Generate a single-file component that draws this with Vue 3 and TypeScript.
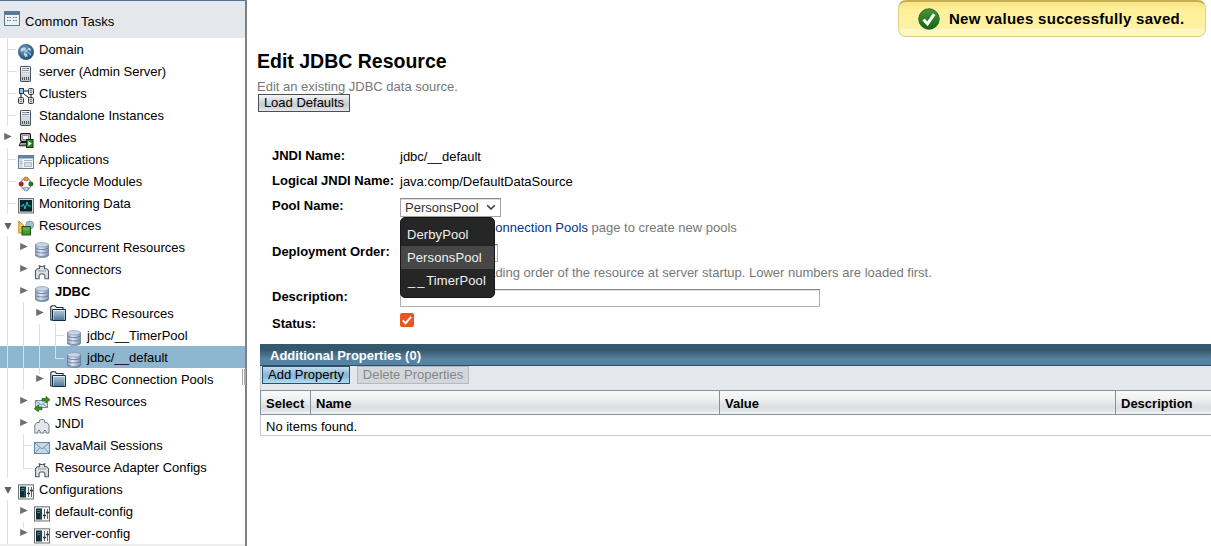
<script setup lang="ts">
type Guide = 'line' | 'tee' | 'end' | 'stub' | 'none' | 'right' | 'down'

interface TreeNode {
  label: string
  icon: string
  level: number
  guides: Guide[]
  bold?: boolean
  selected?: boolean
}

const nodes: TreeNode[] = [
  { label: 'Domain', icon: 'globe', level: 0, guides: ['tee'] },
  { label: 'server (Admin Server)', icon: 'server', level: 0, guides: ['tee'] },
  { label: 'Clusters', icon: 'cluster', level: 0, guides: ['tee'] },
  { label: 'Standalone Instances', icon: 'server', level: 0, guides: ['tee'] },
  { label: 'Nodes', icon: 'node', level: 0, guides: ['right'] },
  { label: 'Applications', icon: 'app', level: 0, guides: ['tee'] },
  { label: 'Lifecycle Modules', icon: 'lifecycle', level: 0, guides: ['tee'] },
  { label: 'Monitoring Data', icon: 'monitor', level: 0, guides: ['tee'] },
  { label: 'Resources', icon: 'resources', level: 0, guides: ['down'] },
  { label: 'Concurrent Resources', icon: 'db', level: 1, guides: ['line', 'right'] },
  { label: 'Connectors', icon: 'connector', level: 1, guides: ['line', 'right'] },
  { label: 'JDBC', icon: 'db', level: 1, guides: ['line', 'right'], bold: true },
  { label: 'JDBC Resources', icon: 'folder', level: 2, guides: ['line', 'line', 'right'] },
  { label: 'jdbc/__TimerPool', icon: 'db', level: 3, guides: ['line', 'line', 'line', 'tee'] },
  { label: 'jdbc/__default', icon: 'db', level: 3, guides: ['line', 'line', 'line', 'end'], selected: true },
  { label: 'JDBC Connection Pools', icon: 'folder', level: 2, guides: ['line', 'line', 'stub'] },
  { label: 'JMS Resources', icon: 'jms', level: 1, guides: ['line', 'right'] },
  { label: 'JNDI', icon: 'jndi', level: 1, guides: ['line', 'right'] },
  { label: 'JavaMail Sessions', icon: 'mail', level: 1, guides: ['line', 'tee'] },
  { label: 'Resource Adapter Configs', icon: 'connector', level: 1, guides: ['line', 'end'] },
  { label: 'Configurations', icon: 'config', level: 0, guides: ['down'] },
  { label: 'default-config', icon: 'config', level: 1, guides: ['line', 'right'] },
  { label: 'server-config', icon: 'config', level: 1, guides: ['line', 'stub'] },
]

interface Pool {
  prefix: string
  name: string
}

const pools: Pool[] = [
  { prefix: '', name: 'DerbyPool' },
  { prefix: '', name: 'PersonsPool' },
  { prefix: '__', name: 'TimerPool' },
]
const current = 'PersonsPool'
</script>

<template>
  <div class="page">
    <svg class="defs" width="0" height="0" aria-hidden="true">
      <defs>
        <radialGradient id="gGlobe" cx=".4" cy=".35" r=".65">
          <stop offset="0" stop-color="#79a9cf" /><stop offset=".6" stop-color="#3d719d" /><stop offset="1" stop-color="#234b70" />
        </radialGradient>
        <linearGradient id="gDb"><stop offset="0" stop-color="#8fa2c0" /><stop offset=".4" stop-color="#e2eaf6" /><stop offset="1" stop-color="#7e93b6" /></linearGradient>
        <linearGradient id="gFolder" x2="0" y2="1"><stop offset="0" stop-color="#a9c2d8" /><stop offset="1" stop-color="#56799a" /></linearGradient>
        <linearGradient id="gSteel" x2="0" y2="1"><stop offset="0" stop-color="#fff" /><stop offset="1" stop-color="#b8c0ca" /></linearGradient>
        <linearGradient id="gCheck" x2="0" y2="1"><stop offset="0" stop-color="#4b9440" /><stop offset="1" stop-color="#13650f" /></linearGradient>
      </defs>
    </svg>

    <aside class="side">
      <div class="side-head">
        <svg class="tasks" width="16" height="15" viewBox="0 0 16 15">
          <rect x=".5" y=".5" width="15" height="14" fill="#edf2f6" stroke="#60788c" />
          <rect x="1" y="1" width="14" height="3" fill="#527b9b" />
          <path d="M3 6.5h1m.6 0h1m.6 0h.8M3 9.5h1m.6 0h1m.6 0h.8M9 6.5h1m.6 0h1m.6 0h.8M9 9.5h1m.6 0h1m.6 0h.8" stroke="#6d7780" />
        </svg>
        <span>Common Tasks</span>
      </div>
      <div v-for="n in nodes" :key="n.label" class="node" :class="[`lv${n.level}`, { selected: n.selected }]">
        <span v-for="(g, i) in n.guides" :key="i" class="guide" :class="g">
          <svg v-if="g === 'right' || g === 'stub'" class="arrow" width="8" height="7" viewBox="0 0 8 7"><path d="M.2 0 7.8 3.5.2 7z" fill="#6e6e6e" /></svg>
          <svg v-if="g === 'down'" class="arrow open" width="8" height="7" viewBox="0 0 8 7"><path d="M.4 0h7.2L4 7z" fill="#606060" /></svg>
        </span>
        <svg class="icon" width="16" height="16" viewBox="0 0 16 16">
          <g v-if="n.icon === 'globe'">
            <circle cx="8" cy="8" r="7.7" fill="url(#gGlobe)" stroke="#315c82" stroke-width=".6" />
            <path d="M3.4 4.5 6 3.2l2 .9-.8 1.8-2.1.3L4 8 2.3 6.7zM9.8 3.5l2.6 1 .9 2.3-2.4-.5zM6.2 9l2.5.7.6 1.6-1.6 2.1-1.3-1.8zM11.3 10l1.7-.5-.8 2.4z" fill="#b9d4e8" />
            <path d="M3 4.5 8 7l4-3M8 7l-2 3 4 2.5M8 7l4.5 3" stroke="#dfedf8" stroke-width=".6" fill="none" />
          </g>
          <g v-else-if="n.icon === 'server'">
            <rect x="2.5" y=".5" width="10" height="15" rx=".6" fill="url(#gSteel)" stroke="#4b5158" />
            <path d="M4 2.5h5M4 4.5h7" stroke="#8d949d" /><path d="M9 2.5h2" stroke="#2465c4" /><path d="M4 6.5h7" stroke="#c3c9d0" />
            <path d="M4.5 11v3m2-3v3m2-3v3m2-3v3" stroke="#535961" />
          </g>
          <g v-else-if="n.icon === 'cluster'">
            <path d="M5 3h5M3 6v3M6 6l5 4M13 7v2" stroke="#111" fill="none" />
            <rect x="1.5" y=".5" width="4" height="5" fill="#8cc4e8" stroke="#123f67" />
            <g fill="#d5d9dd" stroke="#353a3f"><rect x="10.5" y=".5" width="5" height="6" rx="1" /><rect x=".5" y="9.5" width="5" height="6" rx="1" /><rect x="10.5" y="9.5" width="5" height="6" rx="1" /></g>
            <path d="M12 2.5h2m-2 2h2M2 11.5h2m-2 2h2m8-2h2m-2 2h2" stroke="#737a80" />
          </g>
          <g v-else-if="n.icon === 'node'">
            <rect x="2.6" y="1.6" width="9.8" height="7.8" rx="1" fill="#e3e5e9" stroke="#171717" stroke-width="1.2" />
            <path d="M4.5 3.5h6v4h-6z" fill="#fff" stroke="#777" stroke-width=".8" />
            <path d="m2.5 10.5-1.3 3.3h8.3v-3.3z" fill="#cfd2d8" stroke="#111" /><path d="M3 12.2h5" stroke="#444" stroke-width=".8" />
            <rect x="8.5" y="7.5" width="6.5" height="8" fill="#2d8728" stroke="#0c380b" /><path d="m10.3 9 3.4 2.5-3.4 2.8z" fill="#fff" />
          </g>
          <g v-else-if="n.icon === 'app'">
            <rect x=".5" y="1.5" width="15" height="13" fill="#f4f7f9" stroke="#707b85" /><path d="M1 2h14v2.5H1z" fill="#6186a4" />
            <path d="M1.5 5h3v9h-3z" fill="#c7dae8" /><path d="M6 6.5h8M2 7.5h2m-2 2h2" stroke="#a5b6c4" /><path d="M6.5 8.5h7v4h-7z" fill="#d5e1ea" stroke="#aabbc9" />
          </g>
          <g v-else-if="n.icon === 'lifecycle'">
            <circle cx="8" cy="8" r="5.3" fill="none" stroke="#92969b" stroke-width="1.3" />
            <rect x="6" y="1.2" width="4" height="3.5" rx="1.2" fill="#efa40c" stroke="#865a0a" stroke-width=".7" />
            <rect x="1.2" y="6.2" width="4" height="3.5" rx="1.2" fill="#d31111" stroke="#780909" stroke-width=".7" />
            <rect x="10.9" y="6.2" width="4" height="3.5" rx="1.2" fill="#247c20" stroke="#0b420a" stroke-width=".7" />
            <rect x="6" y="11.2" width="4" height="3.5" rx="1.2" fill="#b9dbef" stroke="#50758d" stroke-width=".7" />
          </g>
          <g v-else-if="n.icon === 'monitor'">
            <rect x=".5" y=".5" width="15" height="14.5" fill="#d4d8dc" stroke="#72777c" /><rect x="2" y="2" width="12" height="11.5" fill="#0b252b" />
            <path d="M2.5 8h2l1-2 1.5 5 2-7 1.3 4H13" fill="none" stroke="#29c3cf" />
          </g>
          <g v-else-if="n.icon === 'resources'">
            <circle cx="11.8" cy="5" r="4" fill="#a9bdd2" stroke="#6c8095" stroke-width=".7" /><path d="M.8 1v12h5.5V6z" fill="#f7ca5b" stroke="#c28618" />
            <rect x="4" y="6.5" width="8.5" height="8.5" fill="#45962e" stroke="#195d0c" /><path d="M5 7.5h6.5v3H5z" fill="#65aa4b" />
          </g>
          <g v-else-if="n.icon === 'db'">
            <path d="M1.5 2.5v10.8C2.5 16.4 13.5 16.4 14.5 13.3V2.5z" fill="url(#gDb)" stroke="#687991" stroke-width=".7" />
            <path d="M1.5 5.8c1.8 2.4 11.2 2.4 13 0m-13 3.4c1.8 2.4 11.2 2.4 13 0m-13 3.4c1.8 2.4 11.2 2.4 13 0" fill="none" stroke="#5d7292" stroke-width=".8" />
            <ellipse cx="8" cy="2.8" rx="6.5" ry="2.2" fill="#c6d5ea" stroke="#8798ad" stroke-width=".7" />
          </g>
          <g v-else-if="n.icon === 'connector'">
            <path d="M5.5 2.5h5v2.2h2.2l1.8 2v8h-3.6v-3.2L9.6 10H6.4l-1.3 1.5v3.2H1.5v-8l1.8-2h2.2z" fill="#dce0e5" stroke="#555b62" stroke-width="1.1" />
            <path d="M4 7h8" stroke="#9aa1a9" /><path d="M4.5 1.8h2m3 0h2" stroke="#555b62" />
          </g>
          <g v-else-if="n.icon === 'folder'">
            <path d="M2 15H.8V1.8L2 .8h3.2l1.4 1.7H13v2" fill="#f2f5f7" stroke="#202a34" stroke-width="1.1" /><path d="M2.5 4.5h13v11h-13z" fill="#e3ecf3" stroke="#142d44" />
            <path d="M3.5 6h11v9h-11z" fill="url(#gFolder)" />
          </g>
          <g v-else-if="n.icon === 'jms'">
            <rect x="1.5" y="4.5" width="12" height="7" fill="#d2e1ee" stroke="#758ca1" /><path d="m2 5 5.5 4L13 5M2 11l4-3m7 3L9 8" fill="none" stroke="#8199ad" />
            <path d="M8 2.5h4V.5L16 3.8l-4 3.1V5H8zM8 11H4.5V9L.3 12.7l4.2 3.1v-2H8z" fill="#3d941a" stroke="#245d0b" stroke-width=".7" />
          </g>
          <g v-else-if="n.icon === 'jndi'">
            <path d="M5.3 4.5V3c0-2 5.4-2 5.4 0v1.5H13l2 2.5v8h-3v-2l-1-1-1 1v2H6v-2l-1-1-1 1v2H.8V7l2-2.5z" fill="#e3e7eb" stroke="#777d84" />
          </g>
          <g v-else-if="n.icon === 'mail'">
            <rect x=".5" y="2.5" width="15" height="11" fill="#c3d8e8" stroke="#6d8599" /><path d="m1 3 7 6 7-6M1 13l5-5.5m9 5.5-5-5.5" fill="none" stroke="#7892a8" />
          </g>
          <g v-else-if="n.icon === 'config'">
            <rect x=".5" y=".8" width="15" height="14.2" fill="#f3f4f5" stroke="#6c7176" /><rect x="2" y="2.5" width="6" height="11" fill="#102b32" />
            <path d="M3 4.5h3M3 6.5h3" stroke="#279299" /><path d="M6.9 3v10" stroke="#496b74" stroke-width=".8" />
            <path d="M10.5 3v10m3-10v10" stroke="#666" /><path d="M9 9.5h3m0-3h3" stroke="#333" stroke-width="1.3" />
          </g>
        </svg>
        <span class="label" :class="{ bold: n.bold }">{{ n.label }}</span>
      </div>
      <div class="side-foot"></div>
      <div class="grip"></div>
    </aside>

    <main class="main">
      <div class="toast">
        <svg width="22" height="22" viewBox="0 0 22 22">
          <circle cx="11" cy="11" r="10.3" fill="url(#gCheck)" stroke="#1c5c18" stroke-width=".8" />
          <path d="m5.5 11.5 4 4.3 6.7-9.6" fill="none" stroke="#fff" stroke-width="3" />
        </svg>
        <span>New values successfully saved.</span>
      </div>

      <h1>Edit JDBC Resource</h1>
      <p class="intro">Edit an existing JDBC data source.</p>
      <button class="btn load">Load Defaults</button>

      <div class="form">
        <div class="field jndi-row"><label>JNDI Name:</label><div class="value text">jdbc/__default</div></div>
        <div class="field logical-row"><label>Logical JNDI Name:</label><div class="value text">java:comp/DefaultDataSource</div></div>
        <div class="field pool-row">
          <label>Pool Name:</label>
          <div class="value">
            <div class="select">
              <span>{{ current }}</span>
              <svg width="10" height="7" viewBox="0 0 10 7"><path d="m1.2 1.2 3.8 3.8 3.8-3.8" fill="none" stroke="#333" stroke-width="1.5" /></svg>
              <div class="menu">
                <div v-for="p in pools" :key="p.name" class="option" :class="{ active: p.name === current }"><span v-if="p.prefix" class="prefix">{{ p.prefix }}</span>{{ p.name }}</div>
              </div>
            </div>
            <div class="help">Use the JDBC <a>Connection Pools</a> page to create new pools</div>
          </div>
        </div>
        <div class="field order-row">
          <label>Deployment Order:</label>
          <div class="value"><div class="input order"></div><div class="help">Specifies the loading order of the resource at server startup. Lower numbers are loaded first.</div></div>
        </div>
        <div class="field desc-row"><label>Description:</label><div class="value"><div class="input desc"></div></div></div>
        <div class="field status-row">
          <label>Status:</label>
          <div class="value"><svg class="check" width="14" height="14" viewBox="0 0 14 14"><rect width="14" height="14" rx="2" fill="#e95420" /><path d="m2.8 7.4 2.8 2.8 5.6-6.4" fill="none" stroke="#fff" stroke-width="2" /></svg></div>
        </div>
      </div>

      <section class="table">
        <div class="caption">Additional Properties (0)</div>
        <div class="actions"><button class="btn primary">Add Property</button><button class="btn disabled">Delete Properties</button></div>
        <div class="head"><div>Select</div><div>Name</div><div>Value</div><div>Description</div></div>
        <div class="empty">No items found.</div>
      </section>
    </main>
  </div>
</template>

<style>
body { margin: 0; overflow: hidden; background: #fff; }
</style>

<style scoped>
.page { display: flex; width: 1211px; height: 546px; overflow: hidden; font: 13px/16px "Liberation Sans", Arial, sans-serif; color: #000; background: #fff; }
.page * { box-sizing: border-box; }
.defs { position: absolute; }
.side { position: relative; width: 247px; flex: none; border-right: 2px solid #808080; }
.side-head { height: 38px; background: #e4e8ec; border-top: 1px solid #4b7599; display: flex; padding: 10px 0 0 4px; }
.side-head span { margin: 3px 0 0 5px; }
.node { height: 22px; display: flex; position: relative; padding-left: 2px; white-space: nowrap; }
.node.selected { background: #8fb6cf; }
.guide { width: 16px; height: 22px; flex: none; position: relative; }
.guide.line::before, .guide.tee::before { content: ""; display: block; margin-left: 5px; width: 1px; height: 22px; background: #dedede; }
.guide.end::before { content: ""; display: block; margin-left: 5px; width: 8px; height: 12px; border-left: 1px solid #dedede; border-bottom: 1px solid #dedede; }
.guide.stub::before { content: ""; position: absolute; left: 5px; width: 1px; height: 6px; background: #dedede; }
.guide.tee::after { content: ""; position: absolute; left: 6px; top: 11px; width: 8px; height: 1px; background: #dedede; }
.arrow { display: block; margin: 7px 0 0 2px; }
.arrow.open { margin-top: 9px; }
.icon { flex: none; margin-top: 6px; }
.lv2 .icon { margin-top: 3px; }
.label { margin: 4px 0 0 5px; }
.lv2 .label { margin-left: 8px; }
.bold { font-weight: bold; }
.side-foot { height: 2px; background: #eee; }
.grip { position: absolute; left: 242px; top: 369px; width: 4px; height: 16px; border: solid #aaa; border-width: 0 2px 0 1px; background: #fff; }
.main { flex: 1; min-width: 0; position: relative; padding-left: 11px; }
.toast { position: absolute; left: 651px; top: 0; width: 308px; height: 37px; border: 1px solid #e0cf84; border-top: 2px solid #c5ad50; border-radius: 8px; background: linear-gradient(#f5e583 0, #fff09a 8px, #fff2a4 27px, #fff8ce 27px, #fff6bd); display: flex; align-items: center; padding-left: 19px; font-size: 15px; letter-spacing: .29px; font-weight: bold; white-space: nowrap; }
.toast span { margin-left: 9px; }
h1 { margin: 49px 0 0 -1px; height: 29px; font-size: 19.5px; line-height: 24px; font-weight: bold; }
.intro { margin: 0 0 0 -1px; height: 16px; color: #777; line-height: 18px; }
.btn { font: 13px/14px "Liberation Sans", Arial, sans-serif; color: #000; border: 1px solid #4b4f56; border-radius: 0; padding: 0; height: 18px; display: block; white-space: nowrap; background: linear-gradient(#f4f5f6, #d9dbdf 35%, #c7cad0 60%, #e5e7ea); }
.load { width: 92px; }
.form { margin-top: 31px; padding-left: 14px; }
.field { display: flex; }
.field label { width: 128px; font-weight: bold; white-space: nowrap; }
.jndi-row { height: 26px; padding-top: 5px; }
.logical-row { height: 25px; padding-top: 4px; }
.text { padding-top: 1px; }
.pool-row { height: 46px; padding-top: 4px; }
.order-row { height: 46px; padding-top: 4px; }
.desc-row { height: 24px; padding-top: 3px; }
.status-row { height: 34px; padding-top: 4px; }
.status-row label { padding-top: 2px; }
.select { position: relative; width: 101px; height: 19px; border: 1px solid #a4a4a4; border-top-color: #888; display: flex; align-items: center; padding-left: 4px; color: #333; box-shadow: inset 0 1px #ddd; }
.select svg { margin-left: 7px; }
.menu { position: absolute; left: -1px; top: 18px; width: 95px; height: 81px; padding: 5px 0; background: #262626; border: 1px solid #171717; border-radius: 5px; z-index: 2; }
.option { height: 23px; padding-left: 6px; line-height: 23px; color: #f1f1f1; font-size: 13px; letter-spacing: .1px; white-space: nowrap; }
.prefix { margin-left: 1px; letter-spacing: 1.9px; }
.option.active { background: #474747; }
.help { margin-top: 3px; color: #777; line-height: 16px; white-space: nowrap; }
.help a { color: #003399; }
.input { height: 18px; border: 1px solid #b0b0b0; border-top-color: #888; box-shadow: inset 0 1px #e0e0e0; }
.order { width: 98px; }
.desc { width: 420px; }
.check { display: block; margin-top: -1px; }
.table { margin-left: 2px; border-left: 1px solid #c4c9cd; }
.caption { height: 22px; margin-left: -1px; padding-left: 10px; line-height: 23px; font-weight: bold; color: #fff; border-bottom: 1px solid #2b506c; background: linear-gradient(#35586d 0, #35586d 6px, #5783a2 15px, #5783a2); }
.actions { height: 24px; display: flex; gap: 7px; padding-left: 1px; background: #e4e8ec; }
.primary { width: 88px; border-color: #284f70; background: linear-gradient(#c5deed, #8eb8d3 45%, #8ab9d8 60%, #b4ddef); }
.disabled { width: 112px; color: #848688; border-color: #b5b8bd; background: #d3d6da; }
.head { display: grid; grid-template-columns: 50px 409px 396px 1fr; height: 25px; margin-left: -1px; border: 1px solid #7f949e; border-right: 0; font-weight: bold; background: linear-gradient(#fafafa, #f0f1f3 35%, #dcdde1 70%, #e2e3e7 85%, #f5f5f5); }
.head div { height: 23px; padding-left: 5px; line-height: 25px; border-right: 1px solid #7f949e; }
.head div:last-child { border: 0; }
.empty { height: 21px; padding-left: 5px; line-height: 23px; border-bottom: 1px solid #c8cdd0; }
</style>
